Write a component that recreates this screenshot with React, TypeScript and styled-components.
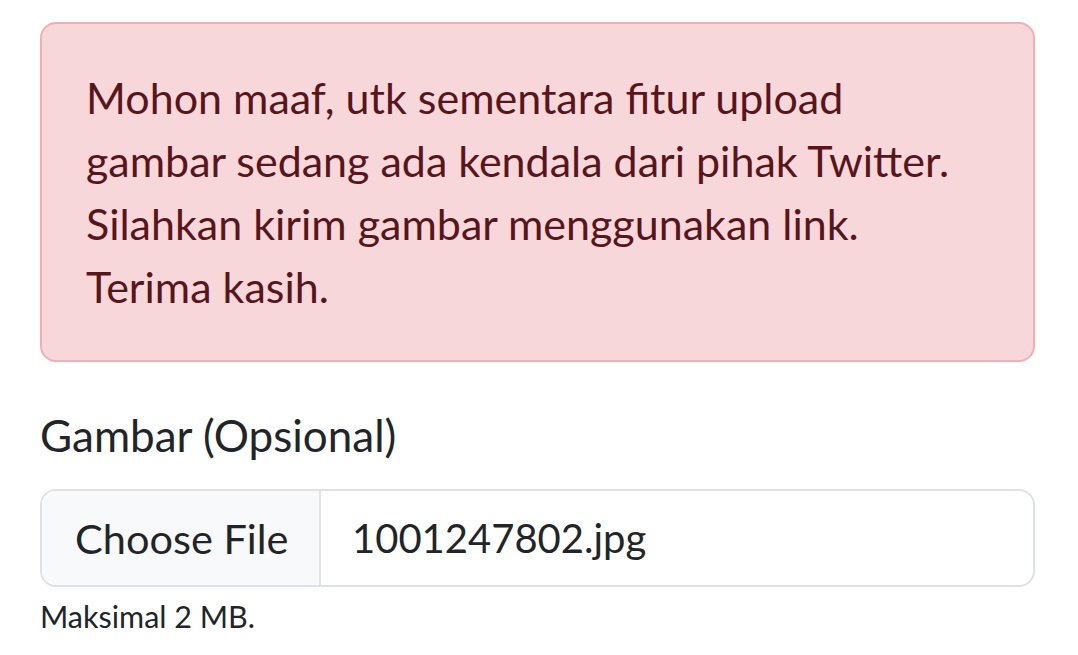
import React from "react";
import styled, { createGlobalStyle } from "styled-components";

const Global = createGlobalStyle`
  html, body { margin: 0; padding: 0; background: #fff; }
  body { font-family: Lato, "Noto Sans", sans-serif; color: #212529; }
`;

const Page = styled.div`
  padding: 22px 43px 0 40px;
  display: flex;
  flex-direction: column;
`;

const Alert = styled.div`
  background: #f8d7da;
  border: 2px solid #f1aeb5;
  border-radius: 16px;
  color: #58151c;
  padding: 42px 44px;
  font-size: 43px;
  line-height: 63px;
  margin-bottom: 42px;
  white-space: nowrap;
`;

const Label = styled.label`
  font-size: 44px;
  line-height: 63px;
  margin-bottom: 22px;
  color: #212529;
`;

const FileInput = styled.div`
  display: flex;
  height: 94px;
  border: 2px solid #dee2e6;
  border-radius: 16px;
  overflow: hidden;
  background: #fff;
  font-size: 40px;
  color: #212529;
`;

const ChooseButton = styled.div`
  display: flex;
  align-items: center;
  flex-shrink: 0;
  white-space: nowrap;
  padding: 0 0 0 33px;
  width: 279px;
  box-sizing: border-box;
  background: #f8f9fa;
  border-right: 2px solid #dee2e6;
  font-size: 41.5px;
`;

const FileName = styled.div`
  display: flex;
  align-items: center;
  white-space: nowrap;
  padding: 0 31px;
`;

const Help = styled.div`
  margin-top: 9px;
  font-size: 30.5px;
  line-height: 40px;
  color: #212529;
`;

export default function App() {
  return (
    <>
      <Global />
      <Page>
        <Alert>
          Mohon maaf, utk sementara fitur upload
          <br />
          gambar sedang ada kendala dari pihak Twitter.
          <br />
          Silahkan kirim gambar menggunakan link.
          <br />
          Terima kasih.
        </Alert>
        <Label>Gambar (Opsional)</Label>
        <FileInput>
          <ChooseButton>Choose File</ChooseButton>
          <FileName>1001247802.jpg</FileName>
        </FileInput>
        <Help>Maksimal 2 MB.</Help>
      </Page>
    </>
  );
}
